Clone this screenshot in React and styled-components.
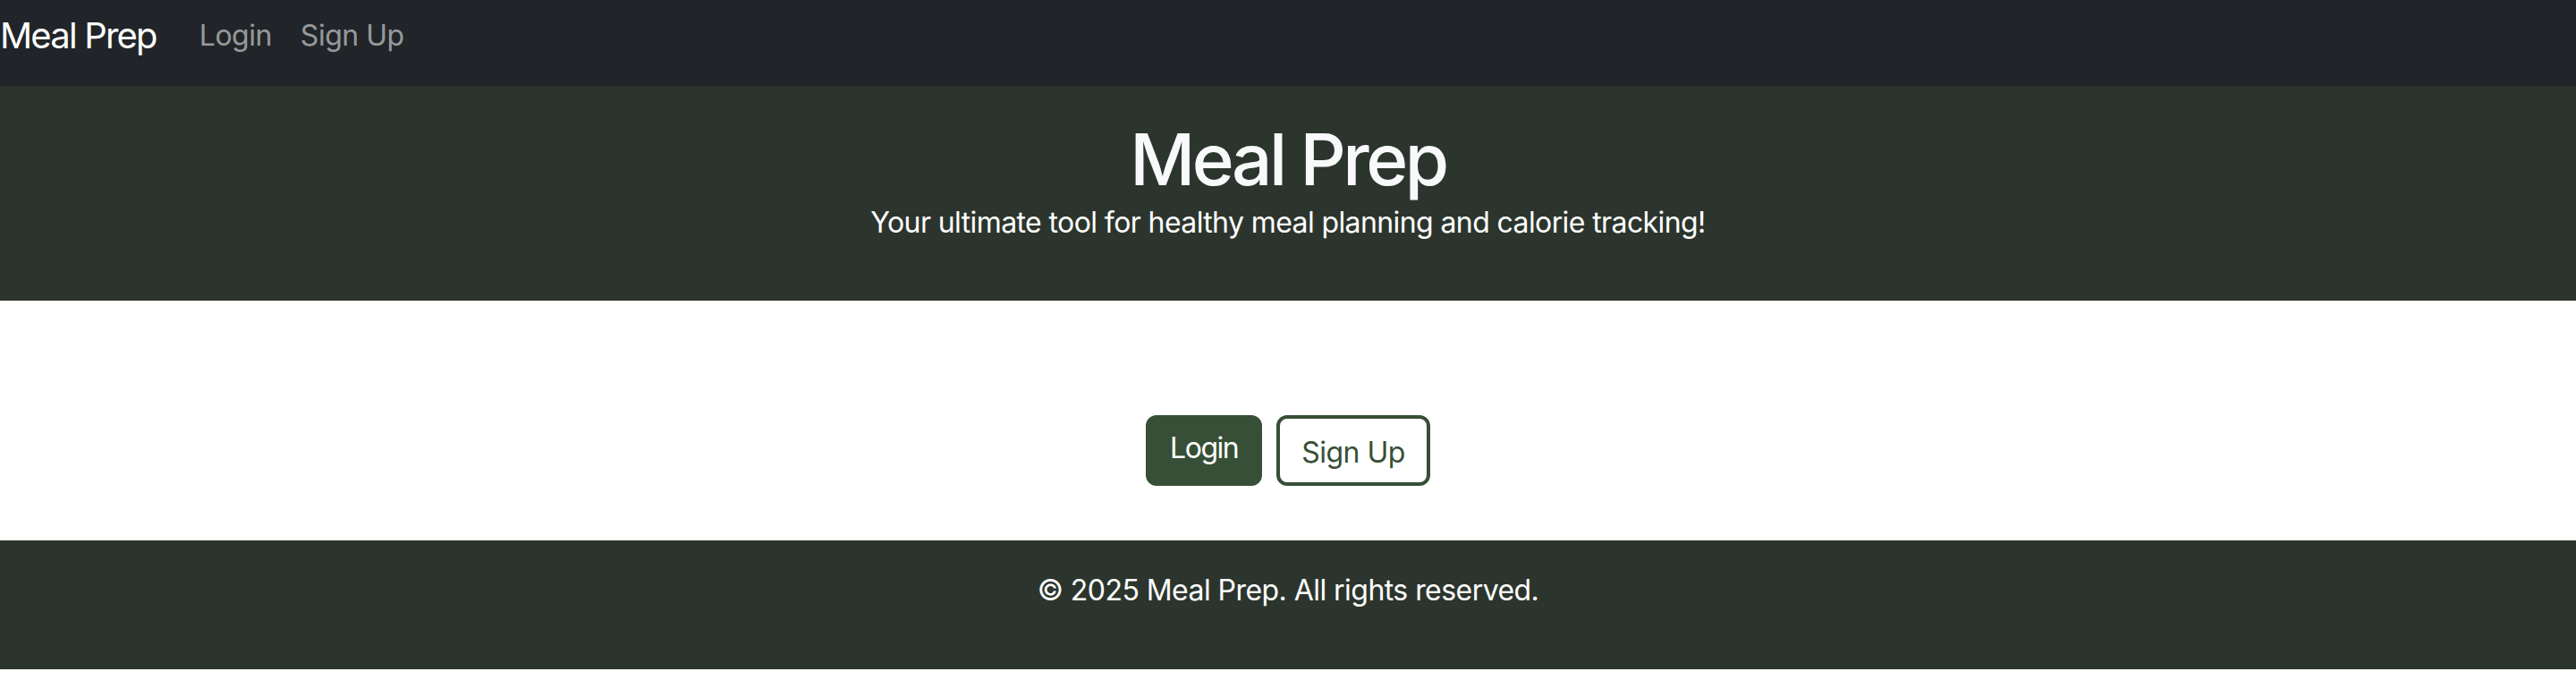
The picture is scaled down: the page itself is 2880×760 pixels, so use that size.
import styled, { createGlobalStyle } from "styled-components";

const GlobalStyle = createGlobalStyle`
    * {
        box-sizing: border-box;
    }

    body {
        margin: 0;
        font-family: Inter, "Liberation Sans", sans-serif;
        background-color: #ffffff;
    }
`;

export default function App() {
    return (
        <>
            <GlobalStyle />
            <Navbar>
                <Brand href="#">Meal Prep</Brand>
                <NavLink href="#">Login</NavLink>
                <NavLink href="#">Sign Up</NavLink>
            </Navbar>
            <Hero>
                <h1>Meal Prep</h1>
                <p>Your ultimate tool for healthy meal planning and calorie tracking!</p>
            </Hero>
            <Actions>
                <ActionButton $variant="solid">Login</ActionButton>
                <ActionButton $variant="outline">Sign Up</ActionButton>
            </Actions>
            <Footer>
                <p>© 2025 Meal Prep. All rights reserved.</p>
            </Footer>
        </>
    );
}

const Navbar = styled.nav`
    height: 96px;
    padding-bottom: 16px;
    display: flex;
    align-items: center;
    background-color: #212529;
`;

const Brand = styled.a`
    font-size: 40px;
    line-height: 60px;
    color: #ffffff;
    text-decoration: none;
    margin-right: 32px;
    letter-spacing: -1.8px;
`;

const NavLink = styled.a`
    font-size: 32px;
    line-height: 48px;
    padding: 0 16px;
    color: rgba(255, 255, 255, 0.55);
    text-decoration: none;
    letter-spacing: -0.5px;
`;

const Hero = styled.header`
    background-color: #2c352d;
    color: #f8f9fa;
    text-align: center;
    padding: 38px 0 63px;

    h1 {
        margin: 0;
        font-size: 80px;
        line-height: 88px;
        font-weight: 500;
        letter-spacing: -3.5px;
    }

    p {
        margin: 3px 0 0;
        font-size: 32px;
        line-height: 48px;
        color: #ffffff;
        letter-spacing: -0.6px;
    }
`;

const Actions = styled.main`
    display: flex;
    justify-content: center;
    gap: 16px;
    padding: 128px 0 61px;
`;

const ActionButton = styled.button`
    height: 79px;
    padding: ${(p) => (p.$variant === "solid" ? "0 24px 6px" : "4px 24px 0")};
    border-radius: 12px;
    font-family: inherit;
    font-size: 32px;
    line-height: 48px;
    letter-spacing: ${(p) => (p.$variant === "solid" ? "-1.5px" : "-0.5px")};
    border: ${(p) => (p.$variant === "solid" ? "3px" : "4px")} solid #374f36;
    background-color: ${(p) => (p.$variant === "solid" ? "#374f36" : "#ffffff")};
    color: ${(p) => (p.$variant === "solid" ? "#ffffff" : "#374f36")};
    cursor: pointer;
`;

const Footer = styled.footer`
    background-color: #2c352d;
    color: #ffffff;
    text-align: center;
    padding: 32px 0;

    p {
        margin: 0 0 32px;
        font-size: 32px;
        line-height: 48px;
        letter-spacing: -0.55px;
    }
`;
